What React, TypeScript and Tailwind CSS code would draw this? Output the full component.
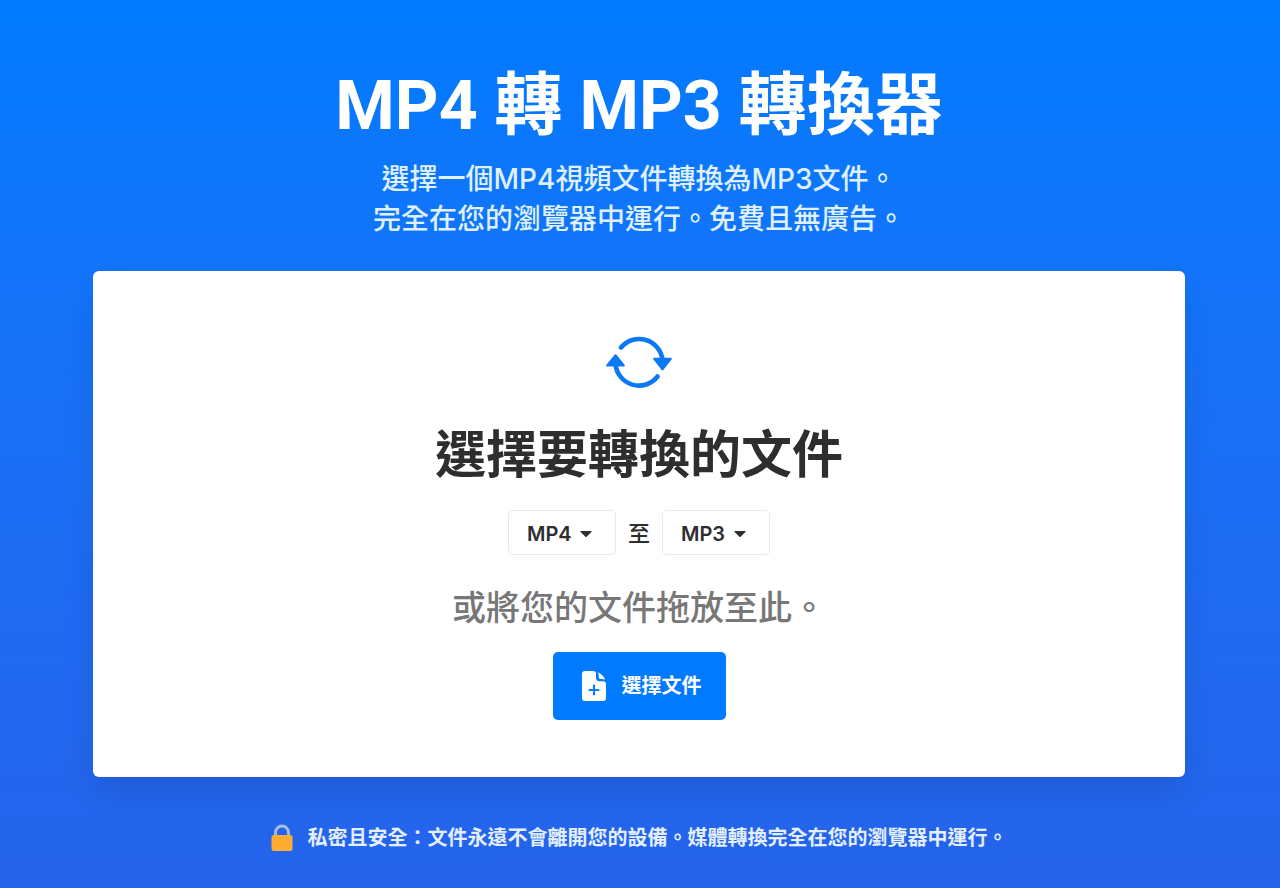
import { useRef, useState } from 'react';

interface FormatSelectProps {
  label: string;
  value: string;
  options: string[];
  onChange: (value: string) => void;
}

function FormatSelect({ label, value, options, onChange }: FormatSelectProps) {
  return (
    <div className="relative">
      <select
        aria-label={label}
        value={value}
        onChange={(e) => onChange(e.target.value)}
        className="block h-[45px] w-[108px] appearance-none rounded-[5px] border border-[#e9e9ea] bg-white pt-[2px] pl-[18px] text-[20px] font-semibold text-[#2e2e2e] outline-none"
      >
        {options.map(option => (
          <option key={option} value={option}>{option}</option>
        ))}
      </select>
      <svg
        viewBox="0 0 12 6"
        className="pointer-events-none absolute top-[21px] right-[24px] h-[6px] w-[12px] fill-[#2e2e2e]"
      >
        <path d="M1 0h10c.6 0 .9.6.4 1L6.600 5.700a.9.9 0 0 1-1.200 0L.6 1C.1.6.4 0 1 0z" />
      </svg>
    </div>
  );
}

function ConvertIcon() {
  return (
    <svg viewBox="0 0 66 52" className="h-[52px] w-[66px]" aria-hidden="true">
      <g fill="none" stroke="#0b78f4" strokeWidth="4.600" strokeLinecap="round">
        <path d="M15 11.500A23.500 23.500 0 0 1 56.500 24" />
        <path d="M9.500 28A23.500 23.500 0 0 0 51.500 40.500" />
      </g>
      <g fill="#0b78f4" stroke="#0b78f4" strokeWidth="2" strokeLinejoin="round">
        <path d="M48.200 22.800h16.600l-8.300 10.700z" />
        <path d="M1.200 29.500h16.600L9.500 19.200z" />
      </g>
    </svg>
  );
}

function FileAddIcon() {
  return (
    <svg viewBox="0 0 24 30" className="h-[30px] w-[24px]" aria-hidden="true">
      <path
        fill="#fff"
        d="M3 0h8.500c1.700 0 2.500 1 2.500 2.600v4.400c0 2 1.200 3.200 3.200 3.200h4c1.800 0 2.800 1.100 2.800 2.800v14c0 1.800-1.200 3-3 3H3c-1.800 0-3-1.200-3-3V3c0-1.800 1.200-3 3-3z"
      />
      <path fill="#fff" d="M15.300 1.200c4 1.200 6.700 4 7.800 7.600-.9-.6-1.800-.8-2.900-.8h-2c-.9 0-1.400-.5-1.400-1.400V4.900c0-1.500-.5-2.700-1.500-3.700z" />
      <path stroke="#007bff" strokeWidth="2" strokeLinecap="round" d="M12 14.500v9M7.500 19h9" />
    </svg>
  );
}

function LockIcon() {
  return (
    <svg viewBox="0 0 22 28" className="h-[28px] w-[22px] shrink-0" aria-hidden="true">
      <path
        fill="none"
        stroke="#a9bfdc"
        strokeWidth="2.800"
        d="M4.500 13V8.500a6.500 6.500 0 0 1 13 0V13"
      />
      <rect x="0.500" y="11" width="21" height="16" rx="2.500" fill="#ffac33" />
    </svg>
  );
}

export default function App() {
  const [from, setFrom] = useState('MP4');
  const [to, setTo] = useState('MP3');
  const fileInput = useRef<HTMLInputElement>(null);

  return (
    <div
      lang="zh-Hant"
      className="flex min-h-screen flex-col bg-linear-to-b from-[#007bff] to-[#2563eb] pt-[66px] pr-[95px] pb-[30px] pl-[93px] font-['Inter','Noto_Sans_CJK_TC',sans-serif]"
    >
      {/* Heading */}
      <header className="text-center">
        <h1 className="font-['Roboto','Noto_Sans_CJK_TC',sans-serif] text-[68px] leading-[80px] font-bold text-white">
          MP4 轉 MP3 轉換器
        </h1>
        <p className="mt-[13px] text-[28px] leading-[40px] font-medium text-[#dff1ff]">
          選擇一個MP4視頻文件轉換為MP3文件。
          <br />
          完全在您的瀏覽器中運行。免費且無廣告。
        </p>
      </header>

      {/* Converter */}
      <main className="mt-[32px] flex flex-col items-center rounded-[6px] bg-white pt-[65px] pb-[57px] shadow-[0_16px_32px_-4px_rgba(0,0,0,0.12)]">
        <ConvertIcon />
        <h2 className="mt-[33px] text-[51px] leading-[68px] font-bold text-[#2e2e2e]">選擇要轉換的文件</h2>
        <div className="mt-[21px] flex items-center gap-[12px]">
          <FormatSelect label="來源格式" value={from} options={['MP4', 'MOV', 'WEBM']} onChange={setFrom} />
          <span className="text-[22px] leading-[32px] font-medium text-[#2e2e2e]">至</span>
          <FormatSelect label="目標格式" value={to} options={['MP3', 'WAV', 'OGG']} onChange={setTo} />
        </div>
        <p className="mt-[33px] text-[34px] leading-[40px] font-medium text-[#777777]">或將您的文件拖放至此。</p>
        <button
          type="button"
          onClick={() => fileInput.current?.click()}
          className="mt-[24px] flex h-[68px] items-center gap-[16px] rounded-[5px] bg-[#007bff] pr-[24px] pl-[29px] text-[20px] font-bold text-white"
        >
          <FileAddIcon />
          選擇文件
        </button>
        <input ref={fileInput} type="file" aria-label="選擇文件" className="hidden" />
      </main>

      {/* Privacy note */}
      <footer className="mt-[45px] flex items-center justify-center gap-[15px]">
        <LockIcon />
        <p className="text-[20px] leading-[32px] font-semibold text-[#e3efff]">
          私密且安全：文件永遠不會離開您的設備。媒體轉換完全在您的瀏覽器中運行。
        </p>
      </footer>
    </div>
  );
}
